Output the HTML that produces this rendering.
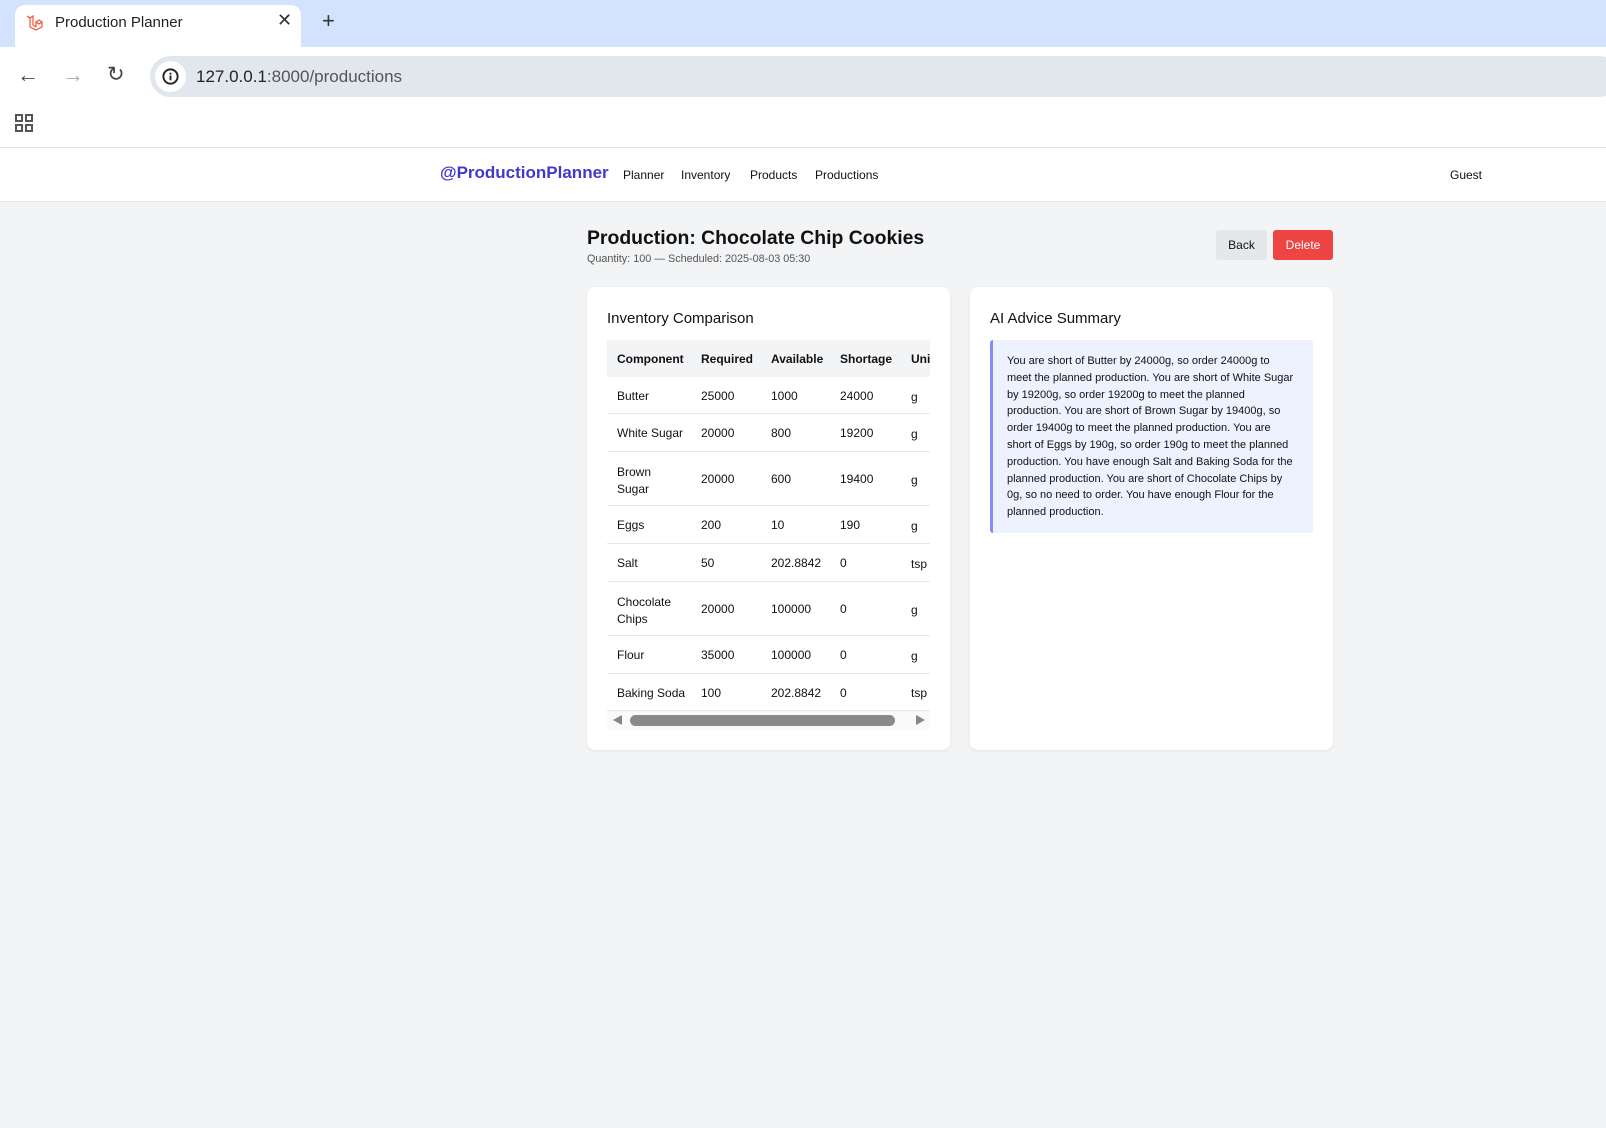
<!DOCTYPE html>
<html><head><meta charset="utf-8"><style>
*{box-sizing:border-box;margin:0;padding:0}
body{width:1606px;height:1128px;overflow:hidden;background:#f3f4f6;font-family:"Liberation Sans",sans-serif;color:#111;position:relative}
.abs{position:absolute}
.tabbar{left:0;top:0;width:1606px;height:47px;background:#d3e3fd}
.tab{left:15px;top:5px;width:286px;height:42px;background:#fff;border-radius:10px 10px 0 0}
.toolbar{left:0;top:47px;width:1606px;height:101px;background:#fff;border-bottom:1px solid #e0e0e0}
.url{left:150px;top:56px;width:1470px;height:41px;background:#e2e6ed;border-radius:21px}
.nav{left:0;top:148px;width:1606px;height:54px;background:#fff;border-bottom:1px solid #e5e7eb}
.nav span{position:absolute;top:20px;font-size:12px;color:#111}
.card{background:#fff;border-radius:8px;box-shadow:0 1px 3px rgba(0,0,0,.08)}
.row{position:absolute;left:607px;width:323px;border-bottom:1px solid #e5e7eb;font-size:12px}
.row span{position:absolute}
</style></head><body>
<div class="abs tabbar"></div>
<div class="abs tab"></div>
<svg class="abs" style="left:25px;top:13px" width="20" height="20" viewBox="0 0 20 20" fill="none" stroke="#f05340" stroke-width="1.2"><path d="M2 3l3 2v9l6 3 6-3V9l-3-2-3 2v5M5 5l3-2v9l3 2M11 9l3-2 3 2-3 2z"/></svg>
<div class="abs" style="left:55px;top:14px;font-size:15px;color:#222">Production Planner</div>
<div class="abs" style="left:277px;top:10px;font-size:18px;color:#333">✕</div>
<div class="abs" style="left:322px;top:8px;font-size:22px;color:#333">+</div>
<div class="abs toolbar"></div>
<div class="abs" style="left:17px;top:62px;font-size:22px;color:#444">←</div>
<div class="abs" style="left:62px;top:62px;font-size:22px;color:#aaa">→</div>
<div class="abs" style="left:107px;top:62px;font-size:21px;color:#444">↻</div>
<div class="abs url"></div>
<div class="abs" style="left:155px;top:61px;width:31px;height:31px;border-radius:50%;background:#fff"></div>
<svg class="abs" style="left:161px;top:67px" width="19" height="19" viewBox="0 0 20 20"><circle cx="10" cy="10" r="7.5" fill="none" stroke="#222" stroke-width="2"/><rect x="9" y="9" width="2" height="5" fill="#222"/><rect x="9" y="6" width="2" height="2" fill="#222"/></svg>
<div class="abs" style="left:196px;top:67px;font-size:17px;color:#222">127.0.0.1<span style="color:#555">:8000/productions</span></div>
<svg class="abs" style="left:15px;top:114px" width="18" height="18" viewBox="0 0 18 18" fill="none" stroke="#555" stroke-width="2"><rect x="1" y="1" width="6" height="6"/><rect x="11" y="1" width="6" height="6"/><rect x="1" y="11" width="6" height="6"/><rect x="11" y="11" width="6" height="6"/></svg>
<div class="abs nav">
<span style="left:440px;top:15px;font-size:17px;font-weight:bold;color:#4338ca">@ProductionPlanner</span>
<span style="left:623px">Planner</span><span style="left:681px">Inventory</span><span style="left:750px">Products</span><span style="left:815px">Productions</span><span style="left:1450px">Guest</span>
</div>
<div class="abs" style="left:587px;top:227px;font-size:19.4px;font-weight:bold">Production: Chocolate Chip Cookies</div>
<div class="abs" style="left:587px;top:253px;font-size:10.8px;color:#555">Quantity: 100 — Scheduled: 2025-08-03 05:30</div>
<div class="abs" style="left:1216px;top:230px;width:51px;height:30px;background:#e5e7eb;border-radius:3px;font-size:12px;text-align:center;line-height:30px">Back</div>
<div class="abs" style="left:1273px;top:230px;width:60px;height:30px;background:#ef4444;color:#fff;border-radius:3px;font-size:12px;text-align:center;line-height:30px">Delete</div>
<div class="abs card" style="left:587px;top:287px;width:363px;height:463px"></div>
<div class="abs card" style="left:970px;top:287px;width:363px;height:463px"></div>
<div class="abs" style="left:607px;top:310px;font-size:15px;font-weight:500">Inventory Comparison</div>
<div class="abs" style="left:990px;top:310px;font-size:15px">AI Advice Summary</div>
<div class="row" style="top:340px;height:37px;background:#f3f4f6;border:none;font-weight:bold"><span style="left:10px;top:12px">Component</span><span style="left:94px;top:12px">Required</span><span style="left:164px;top:12px">Available</span><span style="left:233px;top:12px">Shortage</span><span style="left:304px;top:12px">Uni</span></div>
<div class="row" style="top:377px;height:37px"><span style="left:10px;top:12px">Butter</span><span style="left:94px;top:12px">25000</span><span style="left:164px;top:12px">1000</span><span style="left:233px;top:12px">24000</span><span style="left:304px;top:13px">g</span></div>
<div class="row" style="top:414px;height:38px"><span style="left:10px;top:12px">White Sugar</span><span style="left:94px;top:12px">20000</span><span style="left:164px;top:12px">800</span><span style="left:233px;top:12px">19200</span><span style="left:304px;top:13px">g</span></div>
<div class="row" style="top:452px;height:54px"><span style="left:10px;top:12px;line-height:17px">Brown<br>Sugar</span><span style="left:94px;top:20px">20000</span><span style="left:164px;top:20px">600</span><span style="left:233px;top:20px">19400</span><span style="left:304px;top:21px">g</span></div>
<div class="row" style="top:506px;height:38px"><span style="left:10px;top:12px">Eggs</span><span style="left:94px;top:12px">200</span><span style="left:164px;top:12px">10</span><span style="left:233px;top:12px">190</span><span style="left:304px;top:13px">g</span></div>
<div class="row" style="top:544px;height:38px"><span style="left:10px;top:12px">Salt</span><span style="left:94px;top:12px">50</span><span style="left:164px;top:12px">202.8842</span><span style="left:233px;top:12px">0</span><span style="left:304px;top:13px">tsp</span></div>
<div class="row" style="top:582px;height:54px"><span style="left:10px;top:12px;line-height:17px">Chocolate<br>Chips</span><span style="left:94px;top:20px">20000</span><span style="left:164px;top:20px">100000</span><span style="left:233px;top:20px">0</span><span style="left:304px;top:21px">g</span></div>
<div class="row" style="top:636px;height:38px"><span style="left:10px;top:12px">Flour</span><span style="left:94px;top:12px">35000</span><span style="left:164px;top:12px">100000</span><span style="left:233px;top:12px">0</span><span style="left:304px;top:13px">g</span></div>
<div class="row" style="top:674px;height:37px"><span style="left:10px;top:12px">Baking Soda</span><span style="left:94px;top:12px">100</span><span style="left:164px;top:12px">202.8842</span><span style="left:233px;top:12px">0</span><span style="left:304px;top:12px">tsp</span></div>
<div class="abs" style="left:607px;top:711px;width:323px;height:19px;background:#fafafa"></div>
<div class="abs" style="left:630px;top:715px;width:265px;height:11px;background:#8a8a8a;border-radius:6px"></div>
<div class="abs" style="left:613px;top:715px;width:0;height:0;border-top:5px solid transparent;border-bottom:5px solid transparent;border-right:9px solid #888"></div>
<div class="abs" style="left:916px;top:715px;width:0;height:0;border-top:5px solid transparent;border-bottom:5px solid transparent;border-left:9px solid #888"></div>
<div class="abs" style="left:990px;top:340px;width:323px;height:193px;background:#eef2ff;border-left:3px solid #818cf8;border-radius:3px;padding:13px 16px 0 14px;font-size:11px;line-height:16.8px;color:#111">You are short of Butter by 24000g, so order 24000g to meet the planned production. You are short of White Sugar by 19200g, so order 19200g to meet the planned production. You are short of Brown Sugar by 19400g, so order 19400g to meet the planned production. You are short of Eggs by 190g, so order 190g to meet the planned production. You have enough Salt and Baking Soda for the planned production. You are short of Chocolate Chips by 0g, so no need to order. You have enough Flour for the planned production.</div>
</body></html>
